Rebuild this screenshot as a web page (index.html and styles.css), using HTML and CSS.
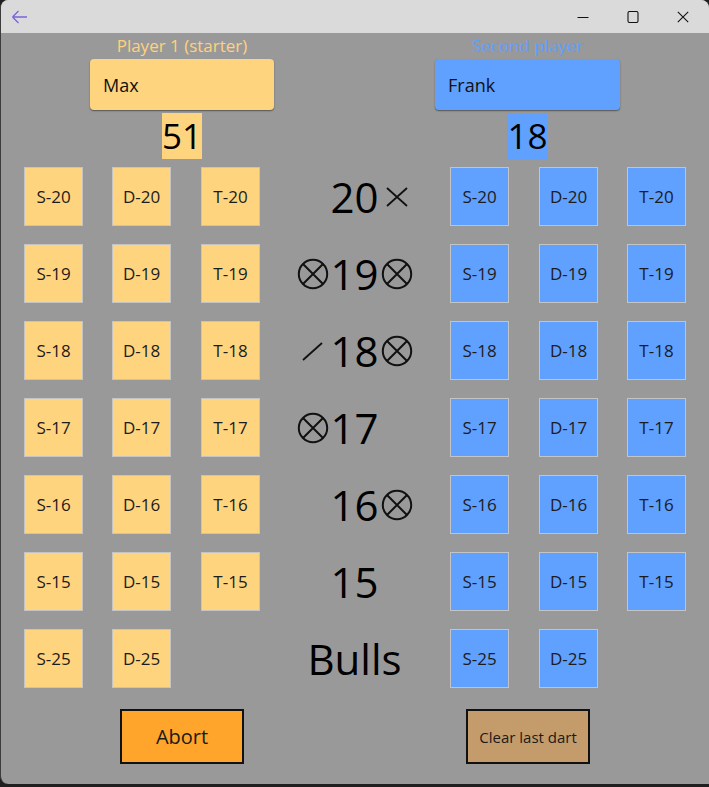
FILE: index.html
```html
<!DOCTYPE html>
<html>
<head>
<meta charset="utf-8">
<link rel="stylesheet" href="styles.css">
</head>
<body>
<div class="window">
  <div class="titlebar">
    <svg class="back" width="18" height="14" viewBox="0 0 18 14"><path d="M1.5 7H16M1.5 7L7.5 1M1.5 7L7.5 13" fill="none" stroke="#7566d9" stroke-width="1.3"/></svg>
    <div class="spacer"></div>
    <div class="ctl"><svg width="12" height="12" viewBox="0 0 12 12"><path d="M0.5 6.5H11.5" stroke="#111" stroke-width="1.1"/></svg></div>
    <div class="ctl"><svg width="12" height="12" viewBox="0 0 12 12"><rect x="1" y="0.5" width="10" height="11" rx="1.5" fill="none" stroke="#111" stroke-width="1.1"/></svg></div>
    <div class="ctl"><svg width="12" height="12" viewBox="0 0 12 12"><path d="M0.8 0.8L11.2 11.2M11.2 0.8L0.8 11.2" stroke="#111" stroke-width="1.1"/></svg></div>
  </div>
  <div class="content">
    <div class="header">
      <div class="player p1">
        <div class="label">Player 1 (starter)</div>
        <div class="name">Max</div>
        <div class="score">51</div>
      </div>
      <div class="player p2">
        <div class="label">Second player</div>
        <div class="name">Frank</div>
        <div class="score">18</div>
      </div>
    </div>

    <div class="board">
      <div class="btn y">S-20</div><div class="btn y">D-20</div><div class="btn y">T-20</div>
      <div class="center"><span class="mark l"></span><span class="num">20</span><span class="mark r"><svg width="32" height="32" viewBox="0 0 32 32"><path d="M6 7L26 25M26 7L6 25" stroke="#111" stroke-width="1.8"/></svg></span></div>
      <div class="btn b">S-20</div><div class="btn b">D-20</div><div class="btn b">T-20</div>

      <div class="btn y">S-19</div><div class="btn y">D-19</div><div class="btn y">T-19</div>
      <div class="center"><span class="mark l"><svg width="32" height="32" viewBox="0 0 32 32"><circle cx="16" cy="16" r="14.2" fill="none" stroke="#111" stroke-width="2"/><path d="M6 6L26 26M26 6L6 26" stroke="#111" stroke-width="2"/></svg></span><span class="num">19</span><span class="mark r"><svg width="32" height="32" viewBox="0 0 32 32"><circle cx="16" cy="16" r="14.2" fill="none" stroke="#111" stroke-width="2"/><path d="M6 6L26 26M26 6L6 26" stroke="#111" stroke-width="2"/></svg></span></div>
      <div class="btn b">S-19</div><div class="btn b">D-19</div><div class="btn b">T-19</div>

      <div class="btn y">S-18</div><div class="btn y">D-18</div><div class="btn y">T-18</div>
      <div class="center"><span class="mark l"><svg width="32" height="32" viewBox="0 0 32 32"><path d="M6 25L25 8" stroke="#111" stroke-width="1.8"/></svg></span><span class="num">18</span><span class="mark r"><svg width="32" height="32" viewBox="0 0 32 32"><circle cx="16" cy="16" r="14.2" fill="none" stroke="#111" stroke-width="2"/><path d="M6 6L26 26M26 6L6 26" stroke="#111" stroke-width="2"/></svg></span></div>
      <div class="btn b">S-18</div><div class="btn b">D-18</div><div class="btn b">T-18</div>

      <div class="btn y">S-17</div><div class="btn y">D-17</div><div class="btn y">T-17</div>
      <div class="center"><span class="mark l"><svg width="32" height="32" viewBox="0 0 32 32"><circle cx="16" cy="16" r="14.2" fill="none" stroke="#111" stroke-width="2"/><path d="M6 6L26 26M26 6L6 26" stroke="#111" stroke-width="2"/></svg></span><span class="num">17</span><span class="mark r"></span></div>
      <div class="btn b">S-17</div><div class="btn b">D-17</div><div class="btn b">T-17</div>

      <div class="btn y">S-16</div><div class="btn y">D-16</div><div class="btn y">T-16</div>
      <div class="center"><span class="mark l"></span><span class="num">16</span><span class="mark r"><svg width="32" height="32" viewBox="0 0 32 32"><circle cx="16" cy="16" r="14.2" fill="none" stroke="#111" stroke-width="2"/><path d="M6 6L26 26M26 6L6 26" stroke="#111" stroke-width="2"/></svg></span></div>
      <div class="btn b">S-16</div><div class="btn b">D-16</div><div class="btn b">T-16</div>

      <div class="btn y">S-15</div><div class="btn y">D-15</div><div class="btn y">T-15</div>
      <div class="center"><span class="mark l"></span><span class="num">15</span><span class="mark r"></span></div>
      <div class="btn b">S-15</div><div class="btn b">D-15</div><div class="btn b">T-15</div>

      <div class="btn y">S-25</div><div class="btn y">D-25</div><div class="empty"></div>
      <div class="center"><span class="bulls">Bulls</span></div>
      <div class="btn b">S-25</div><div class="btn b">D-25</div><div class="empty"></div>
    </div>

    <div class="actions">
      <div class="action abort">Abort</div>
      <div class="action clear">Clear last dart</div>
    </div>
  </div>
</div>
</body>
</html>
```

FILE: styles.css
```css
html, body {
  margin: 0;
  padding: 0;
}
body {
  background: #1f1f1f;
  font-family: "Open Sans", "Noto Sans", "DejaVu Sans", sans-serif;
  width: 709px;
  height: 787px;
  overflow: hidden;
}
.window {
  box-sizing: border-box;
  width: 709px;
  height: 784px;
  border-left: 1px solid #3c3c3c;
  border-radius: 8px 8px 0 8px;
  background: #999999;
  overflow: hidden;
  display: flex;
  flex-direction: column;
}
.titlebar {
  height: 33px;
  flex: none;
  background: #dadada;
  display: flex;
  align-items: center;
}
.back {
  margin-left: 10px;
  margin-top: 1px;
}
.spacer { flex: 1; }
.ctl {
  width: 50px;
  height: 33px;
  display: flex;
  align-items: center;
  justify-content: center;
}
.ctl:last-child { margin-right: 1px; }
.content {
  flex: 1;
  display: flex;
  flex-direction: column;
}
.header {
  display: flex;
  padding-top: 3px;
  padding-left: 89px;
  gap: 161px;
}
.player {
  width: 184px;
  display: flex;
  flex-direction: column;
  align-items: center;
}
.p2 { width: 185px; }
.label {
  font-size: 17px;
  line-height: 20px;
  height: 20px;
}
.p1 .label { color: #ffd27f; }
.p2 .label { color: #5fa0ff; }
.name {
  box-sizing: border-box;
  margin-top: 3px;
  width: 100%;
  height: 51px;
  border-radius: 4px;
  padding-left: 13px;
  display: flex;
  align-items: center;
  font-size: 18px;
  color: #111;
  box-shadow: 0 1px 1.5px rgba(0, 0, 0, 0.45);
}
.p1 .name { background: #ffd47f; }
.p2 .name { background: #60a0ff; }
.score {
  margin-top: 3px;
  height: 46px;
  line-height: 46px;
  font-size: 35px;
  padding: 0 0 0 0;
  color: #000;
}
.p1 .score { background: #ffd47f; width: 40px; text-align: center; }
.p2 .score { background: #60a0ff; width: 41px; text-align: center; }

.board {
  margin-top: 8px;
  padding-left: 23px;
  display: grid;
  grid-template-columns: 88px 89px 59px 190px 89px 88px 59px;
  grid-auto-rows: 59px;
  row-gap: 18px;
}
.btn {
  box-sizing: border-box;
  width: 59px;
  height: 59px;
  border: 1px solid #c4c4c4;
  display: flex;
  align-items: center;
  justify-content: center;
  font-size: 17px;
  color: #1c1c1c;
}
.btn.y { background: #ffd47f; }
.btn.b { background: #60a0ff; }
.center {
  display: grid;
  grid-template-columns: 1fr 48px 1fr;
  align-items: center;
  margin-left: -1px;
}
.num {
  font-size: 42px;
  color: #000;
  text-align: center;
  line-height: 59px;
}
.mark {
  width: 32px;
  height: 32px;
  display: block;
}
.mark svg { display: block; }
.mark.l { justify-self: end; margin-right: 2px; }
.mark.r { justify-self: start; margin-left: 2px; }
.bulls {
  grid-column: 1 / -1;
  text-align: center;
  font-size: 42px;
  line-height: 59px;
  color: #000;
}
.actions {
  margin-top: 21px;
  padding-left: 119px;
  display: flex;
  gap: 222px;
}
.action {
  box-sizing: border-box;
  width: 124px;
  height: 55px;
  border: 2px solid #111;
  display: flex;
  align-items: center;
  justify-content: center;
  color: #1a1a1a;
}
.abort { background: #ffa52b; font-size: 20px; }
.clear { background: #c49c6c; font-size: 15px; }
```
